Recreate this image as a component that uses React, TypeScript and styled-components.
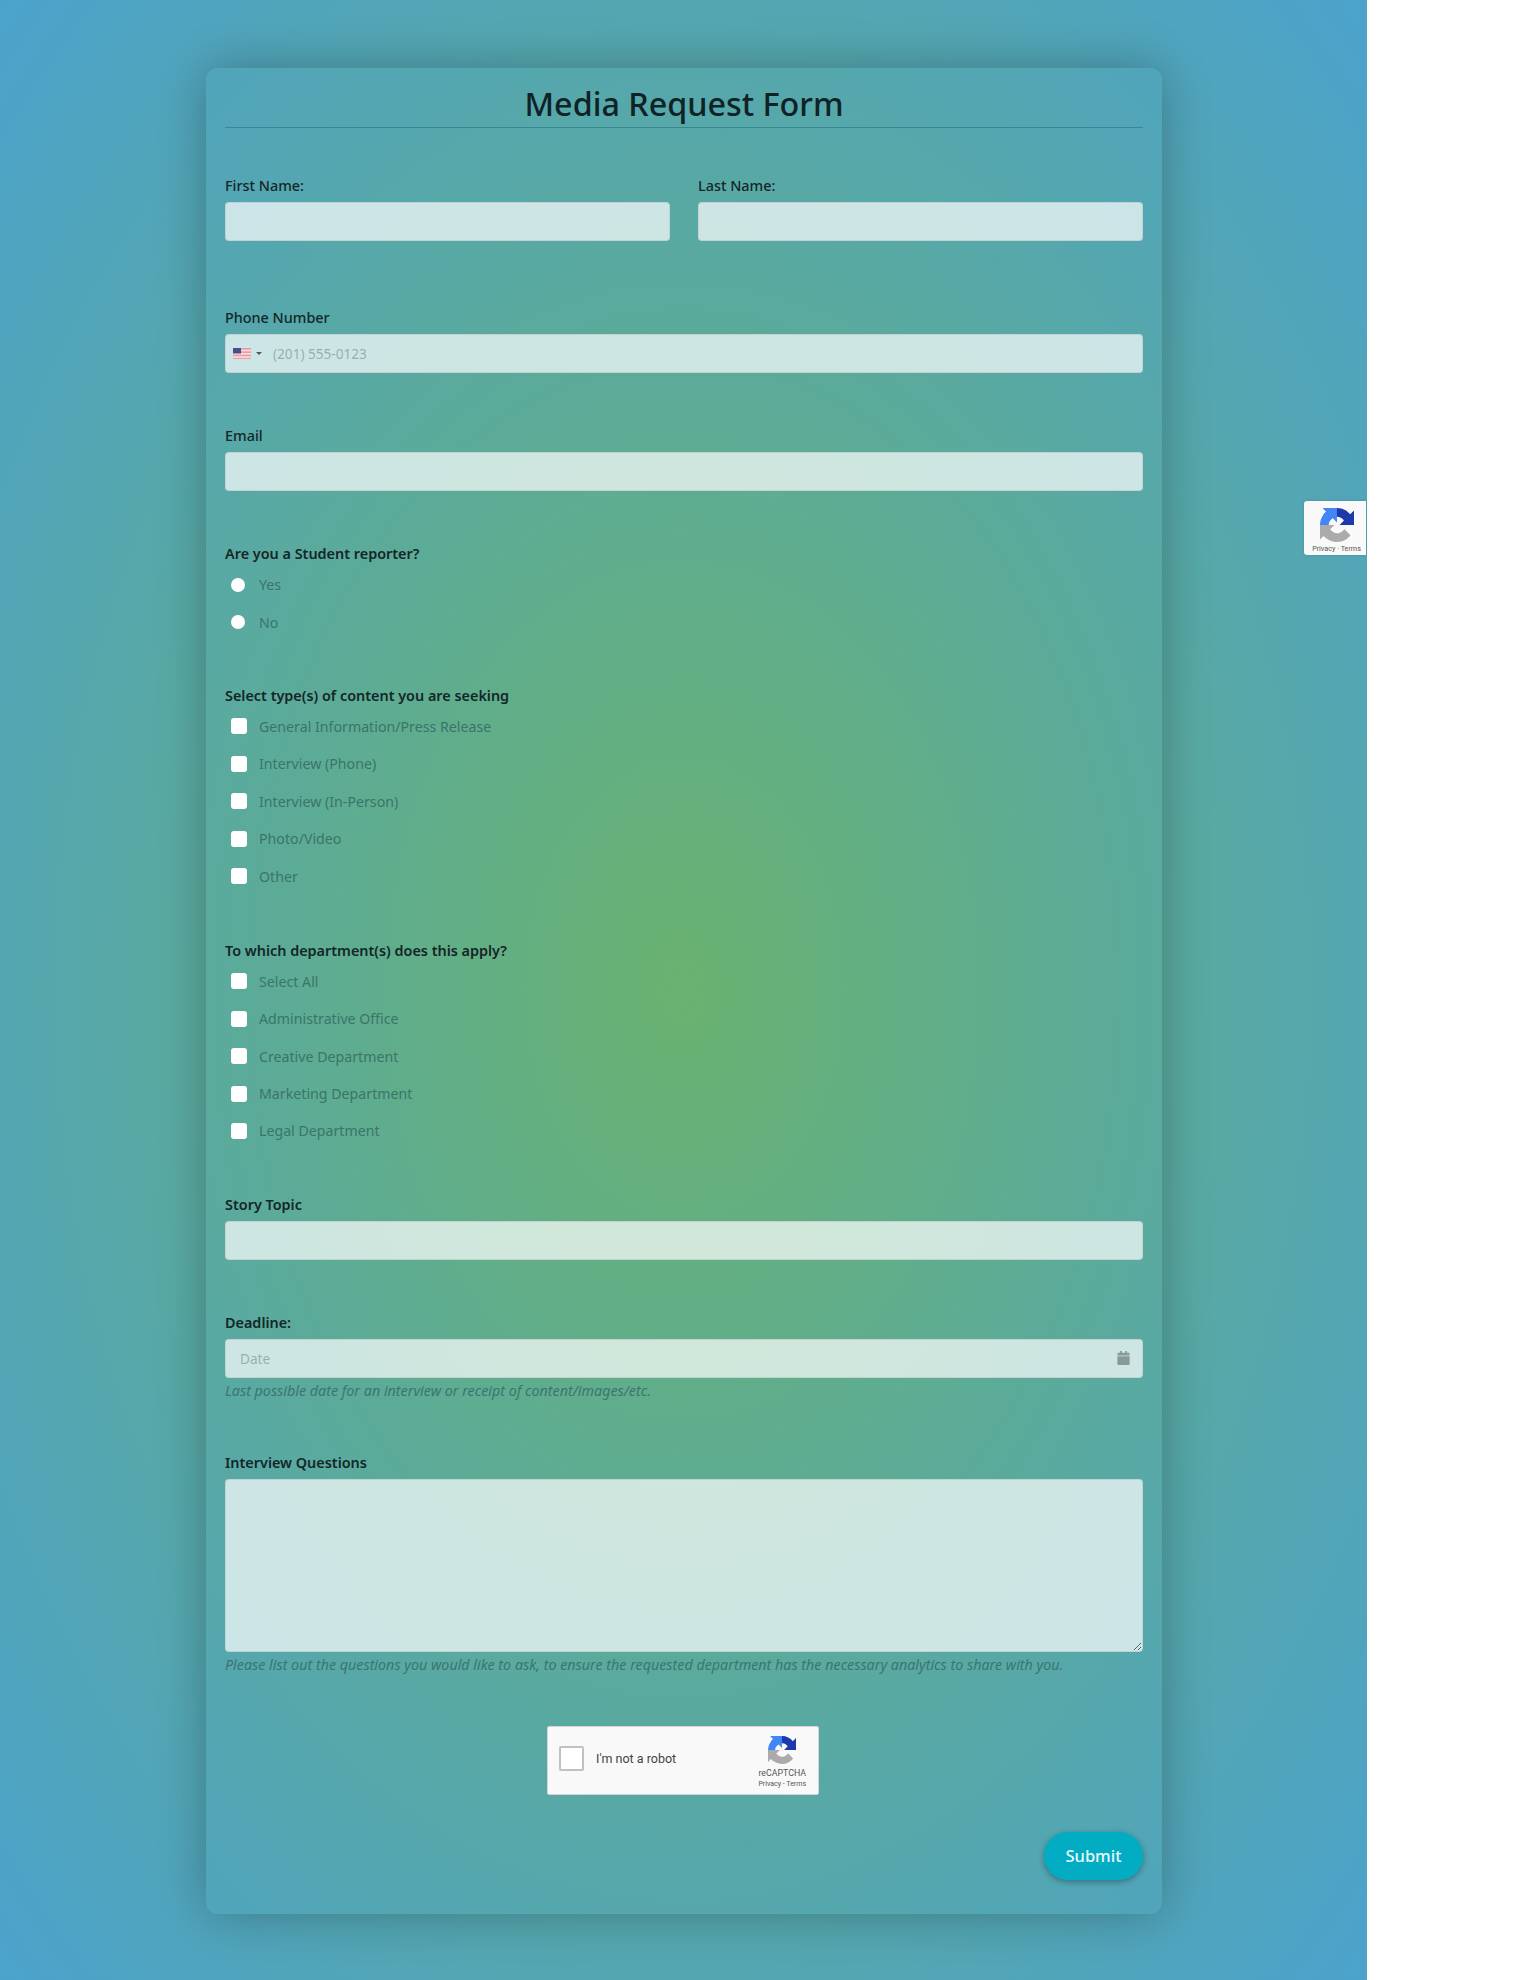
import styled, { createGlobalStyle } from "styled-components"
import { FaCalendar } from "react-icons/fa"

const GlobalStyle = createGlobalStyle`
    html, body {
        margin: 0;
        background: #ffffff;
    }

    * {
        box-sizing: border-box;
    }
`

const Page = styled.div`
    width: 1367px;
    height: 1980px;
    padding-top: 68px;
    background: radial-gradient(ellipse at 50% 50%, #69b270 0%, #4ba2cc 100%);
    font-family: "Noto Sans", "Open Sans", sans-serif;
`

const Card = styled.form`
    width: 956px;
    height: 1846px;
    margin-left: 206px;
    padding: 0 19px;
    border-radius: 12px;
    box-shadow: 0 0 48px rgba(0, 0, 0, 0.27);
`

const Title = styled.h1`
    margin: 0 0 48px;
    height: 60px;
    padding-top: 13px;
    border-bottom: 1px solid rgba(30, 110, 130, 0.55);
    color: #0f2226;
    font-size: 32.3px;
    line-height: 44px;
    font-weight: 500;
    text-align: center;
`

const NameRow = styled.div`
    display: grid;
    grid-template-columns: 1fr 1fr;
    column-gap: 28px;
    margin-bottom: 67px;
`

const Field = styled.div<{ $gap?: number }>`
    margin-bottom: ${props => props.$gap ?? 53}px;
`

const Label = styled.label<{ $tight?: boolean }>`
    display: block;
    margin-bottom: ${props => (props.$tight ? 2 : 6)}px;
    color: #142628;
    font-size: 14.4px;
    line-height: 20px;
    font-weight: 500;
`

const GroupLabel = styled(Label)`
    font-weight: 600;
`

const TextInput = styled.input`
    display: block;
    width: 100%;
    height: 39px;
    padding: 0 15px;
    border: 1px solid rgba(190, 205, 205, 0.8);
    border-radius: 4px;
    outline: none;
    background: rgba(255, 255, 255, 0.7);
    font-family: inherit;
    font-size: 14px;

    &::placeholder {
        color: rgba(90, 120, 125, 0.5);
    }
`

const InputShell = styled.div`
    display: flex;
    align-items: center;
    height: 39px;
    padding: 0 12px 0 7px;
    border: 1px solid rgba(190, 205, 205, 0.8);
    border-radius: 4px;
    background: rgba(255, 255, 255, 0.7);
`

const BareInput = styled.input<{ $inset: number }>`
    flex: 1;
    min-width: 0;
    margin-left: ${props => props.$inset}px;
    padding: 0;
    border: none;
    outline: none;
    background: transparent;
    font-family: inherit;
    font-size: 13.6px;

    &::placeholder {
        color: rgba(90, 120, 125, 0.5);
    }
`

const Caret = styled.span`
    width: 0;
    height: 0;
    margin-left: 5px;
    border-left: 3px solid transparent;
    border-right: 3px solid transparent;
    border-top: 3px solid #555555;
`

const CalendarIcon = styled(FaCalendar)`
    width: 13px;
    height: 14px;
    color: #88999a;
`

const Option = styled.label`
    display: flex;
    align-items: center;
    height: 37.4px;
    padding-left: 6px;
    color: #3b7469;
    font-size: 14.2px;
`

const Radio = styled.input`
    appearance: none;
    width: 14px;
    height: 14px;
    margin: 0 14px 0 0;
    border-radius: 50%;
    background: #ffffff;
`

const Checkbox = styled.input`
    appearance: none;
    width: 16px;
    height: 16px;
    margin: 0 12px 0 0;
    border-radius: 3px;
    background: #ffffff;
`

const Hint = styled.div`
    margin-top: 4px;
    color: #3b7570;
    font-size: 14.3px;
    line-height: 18px;
    font-style: italic;
`

const Questions = styled.textarea`
    display: block;
    width: 100%;
    height: 173px;
    padding: 8px 15px;
    border: 1px solid rgba(190, 205, 205, 0.8);
    border-radius: 4px;
    outline: none;
    background: rgba(255, 255, 255, 0.7);
    resize: vertical;
`

const Captcha = styled.div`
    display: flex;
    align-items: flex-start;
    width: 272px;
    height: 69px;
    margin: 0 0 37px 322px;
    padding: 19px 12px 0 11px;
    border: 1px solid #d3d3d3;
    border-radius: 2px;
    background: #f9f9f9;
    font-family: Roboto, sans-serif;
`

const CaptchaBox = styled.span`
    flex: none;
    width: 25px;
    height: 25px;
    border: 2px solid #c1c1c1;
    border-radius: 2px;
    background: #ffffff;
`

const CaptchaText = styled.span`
    flex: 1;
    margin-left: 12px;
    color: #444444;
    font-size: 12.5px;
    line-height: 25px;
`

const CaptchaBrand = styled.div`
    display: flex;
    flex-direction: column;
    align-items: center;
    margin-top: -10px;
    color: #555555;
    font-size: 8.8px;
    line-height: 11px;

    svg {
        margin-bottom: 4px;
    }
`

const CaptchaLinks = styled.span`
    font-size: 7px;
    line-height: 10px;
`

const Actions = styled.div`
    display: flex;
    justify-content: flex-end;
`

const Submit = styled.button`
    width: 99px;
    height: 48px;
    border: none;
    border-radius: 24px;
    background: #02adc3;
    box-shadow: 0 2px 6px rgba(0, 0, 0, 0.32);
    color: #e8f8f8;
    font-family: inherit;
    font-size: 16.5px;
    font-weight: 500;
`

const Badge = styled.div`
    position: absolute;
    top: 501px;
    left: 1304px;
    display: flex;
    flex-direction: column;
    align-items: center;
    width: 62px;
    height: 54px;
    padding: 7px 0 0 3px;
    border-radius: 3px 0 0 3px;
    background: #f9f9f9;
    box-shadow: 0 0 3px rgba(0, 0, 0, 0.15);
    color: #555555;
    font-family: Roboto, sans-serif;
    font-size: 7.2px;
    line-height: 10px;

    svg {
        margin-bottom: 2px;
    }
`

function CaptchaLogo({ size }: { size: number }) {
    return (
        <svg width={size} height={size} viewBox="0 0 64 64">
            <path fill="#1c3aa9" d="M64 31.955l-.033-1.37V4.687l-7.16 7.16C50.948 4.674 42.033.093 32.05.093c-10.387 0-19.614 4.958-25.48 12.637l11.735 11.86a15.54 15.54 0 0 1 4.753-5.334c2.05-1.6 4.952-2.906 8.99-2.906.488 0 .865.057 1.142.164 5.003.395 9.34 3.156 11.894 7.163l-8.306 8.306c10.52-.04 22.404-.06 33.222-.06" />
            <path fill="#4285f4" d="M31.957.006l-1.37.033H4.687l7.16 7.16C4.674 13.06.093 21.975.093 31.957c0 10.387 4.958 19.614 12.637 25.48l11.86-11.735a15.54 15.54 0 0 1-5.334-4.753c-1.6-2.05-2.906-4.952-2.906-8.99 0-.488.057-.865.164-1.142.395-5.003 3.156-9.34 7.163-11.894l8.306 8.306c-.04-10.52-.06-22.404-.06-33.222" />
            <path fill="#ababab" d="M.001 31.955l.033 1.37v25.9l7.16-7.16c5.86 7.173 14.774 11.754 24.757 11.754 10.387 0 19.614-4.958 25.48-12.637l-11.735-11.86a15.54 15.54 0 0 1-4.753 5.334c-2.05 1.6-4.952 2.906-8.99 2.906-.488 0-.865-.057-1.142-.164-5.003-.395-9.34-3.156-11.894-7.163l8.306-8.306C27.7 31.97 15.816 31.99.998 31.99" />
        </svg>
    )
}

function UsFlag() {
    return (
        <svg width="18" height="11" viewBox="0 0 18 11">
            <rect width="18" height="11" fill="#ee9aa2" />
            <rect y="1.7" width="18" height="1.6" fill="#f5dfe0" />
            <rect y="5" width="18" height="1.6" fill="#f5dfe0" />
            <rect y="8.3" width="18" height="1.6" fill="#f5dfe0" />
            <rect width="8" height="5.5" fill="#4a4f8a" />
        </svg>
    )
}

const contentTypes = ["General Information/Press Release", "Interview (Phone)", "Interview (In-Person)", "Photo/Video", "Other"]
const departments = ["Select All", "Administrative Office", "Creative Department", "Marketing Department", "Legal Department"]

function App() {
    return <Page>
        <GlobalStyle />
        <Card onSubmit={event => event.preventDefault()}>
            <Title>Media Request Form</Title>

            <NameRow>
                <div>
                    <Label>First Name:</Label>
                    <TextInput type="text" />
                </div>
                <div>
                    <Label>Last Name:</Label>
                    <TextInput type="text" />
                </div>
            </NameRow>

            <Field>
                <Label>Phone Number</Label>
                <InputShell>
                    <UsFlag />
                    <Caret />
                    <BareInput type="tel" placeholder="(201) 555-0123" $inset={11} />
                </InputShell>
            </Field>

            <Field>
                <Label>Email</Label>
                <TextInput type="email" />
            </Field>

            <Field $gap={45}>
                <GroupLabel $tight>Are you a Student reporter?</GroupLabel>
                <Option><Radio type="radio" name="student" />Yes</Option>
                <Option><Radio type="radio" name="student" />No</Option>
            </Field>

            <Field $gap={46}>
                <GroupLabel $tight>Select type(s) of content you are seeking</GroupLabel>
                {contentTypes.map(item => <Option key={item}><Checkbox type="checkbox" />{item}</Option>)}
            </Field>

            <Field $gap={45}>
                <GroupLabel $tight>To which department(s) does this apply?</GroupLabel>
                {departments.map(item => <Option key={item}><Checkbox type="checkbox" />{item}</Option>)}
            </Field>

            <Field>
                <GroupLabel>Story Topic</GroupLabel>
                <TextInput type="text" />
            </Field>

            <Field>
                <GroupLabel>Deadline:</GroupLabel>
                <InputShell>
                    <BareInput type="text" placeholder="Date" $inset={7} />
                    <CalendarIcon />
                </InputShell>
                <Hint>Last possible date for an interview or receipt of content/images/etc.</Hint>
            </Field>

            <Field $gap={52}>
                <GroupLabel>Interview Questions</GroupLabel>
                <Questions />
                <Hint>Please list out the questions you would like to ask, to ensure the requested department has the necessary analytics to share with you.</Hint>
            </Field>

            <Captcha>
                <CaptchaBox />
                <CaptchaText>I'm not a robot</CaptchaText>
                <CaptchaBrand>
                    <CaptchaLogo size={28} />
                    reCAPTCHA
                    <CaptchaLinks>Privacy - Terms</CaptchaLinks>
                </CaptchaBrand>
            </Captcha>

            <Actions>
                <Submit type="submit">Submit</Submit>
            </Actions>
        </Card>

        <Badge>
            <CaptchaLogo size={34} />
            Privacy · Terms
        </Badge>
    </Page>
}

export default App
